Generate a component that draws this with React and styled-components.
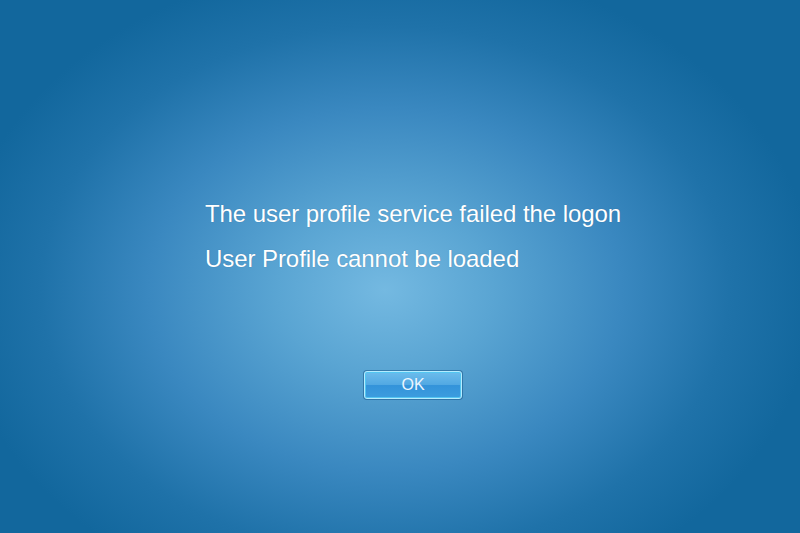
import React from 'react';
import styled, { createGlobalStyle } from 'styled-components';

const GlobalStyle = createGlobalStyle`
  html, body {
    margin: 0;
    padding: 0;
    height: 100%;
  }
  body {
    font-family: Arial, "Liberation Sans", sans-serif;
  }
`;

const Screen = styled.div`
  width: 800px;
  height: 533px;
  overflow: hidden;
  display: flex;
  flex-direction: column;
  background: radial-gradient(
    ellipse 430px 330px at 385px 290px,
    #74b9e1 0%,
    #5aa5d3 25%,
    #3a88c0 55%,
    #1f72a9 80%,
    #12679d 100%
  );
`;

const Messages = styled.div`
  display: flex;
  flex-direction: column;
  gap: 21px;
  padding: 202px 0 0 205px;
`;

const Line = styled.div`
  color: #ffffff;
  font-size: 24px;
  line-height: 24px;
  letter-spacing: -0.07px;
  text-shadow: 0 0 1px rgba(0, 40, 80, 0.3);
`;

const ButtonRow = styled.div`
  display: flex;
  padding: 100px 0 0 364px;
`;

const OkButton = styled.button`
  width: 98px;
  height: 28px;
  border: 1px solid #b4ecff;
  border-radius: 3px;
  box-shadow: 0 0 0 1px rgba(20, 80, 130, 0.5), inset 0 0 0 1px #52c6f2;
  background: linear-gradient(
    to bottom,
    #6cbcec 0%,
    #52a9e3 48%,
    #3393da 52%,
    #3c9ddf 100%
  );
  color: #eaf6ff;
  font-family: Arial, "Liberation Sans", sans-serif;
  font-size: 16px;
  padding: 0;
  cursor: default;
`;

const App = () => {
  return (
    <Screen>
      <GlobalStyle />
      <Messages>
        <Line>The user profile service failed the logon</Line>
        <Line>User Profile cannot be loaded</Line>
      </Messages>
      <ButtonRow>
        <OkButton>OK</OkButton>
      </ButtonRow>
    </Screen>
  );
};

export default App;
